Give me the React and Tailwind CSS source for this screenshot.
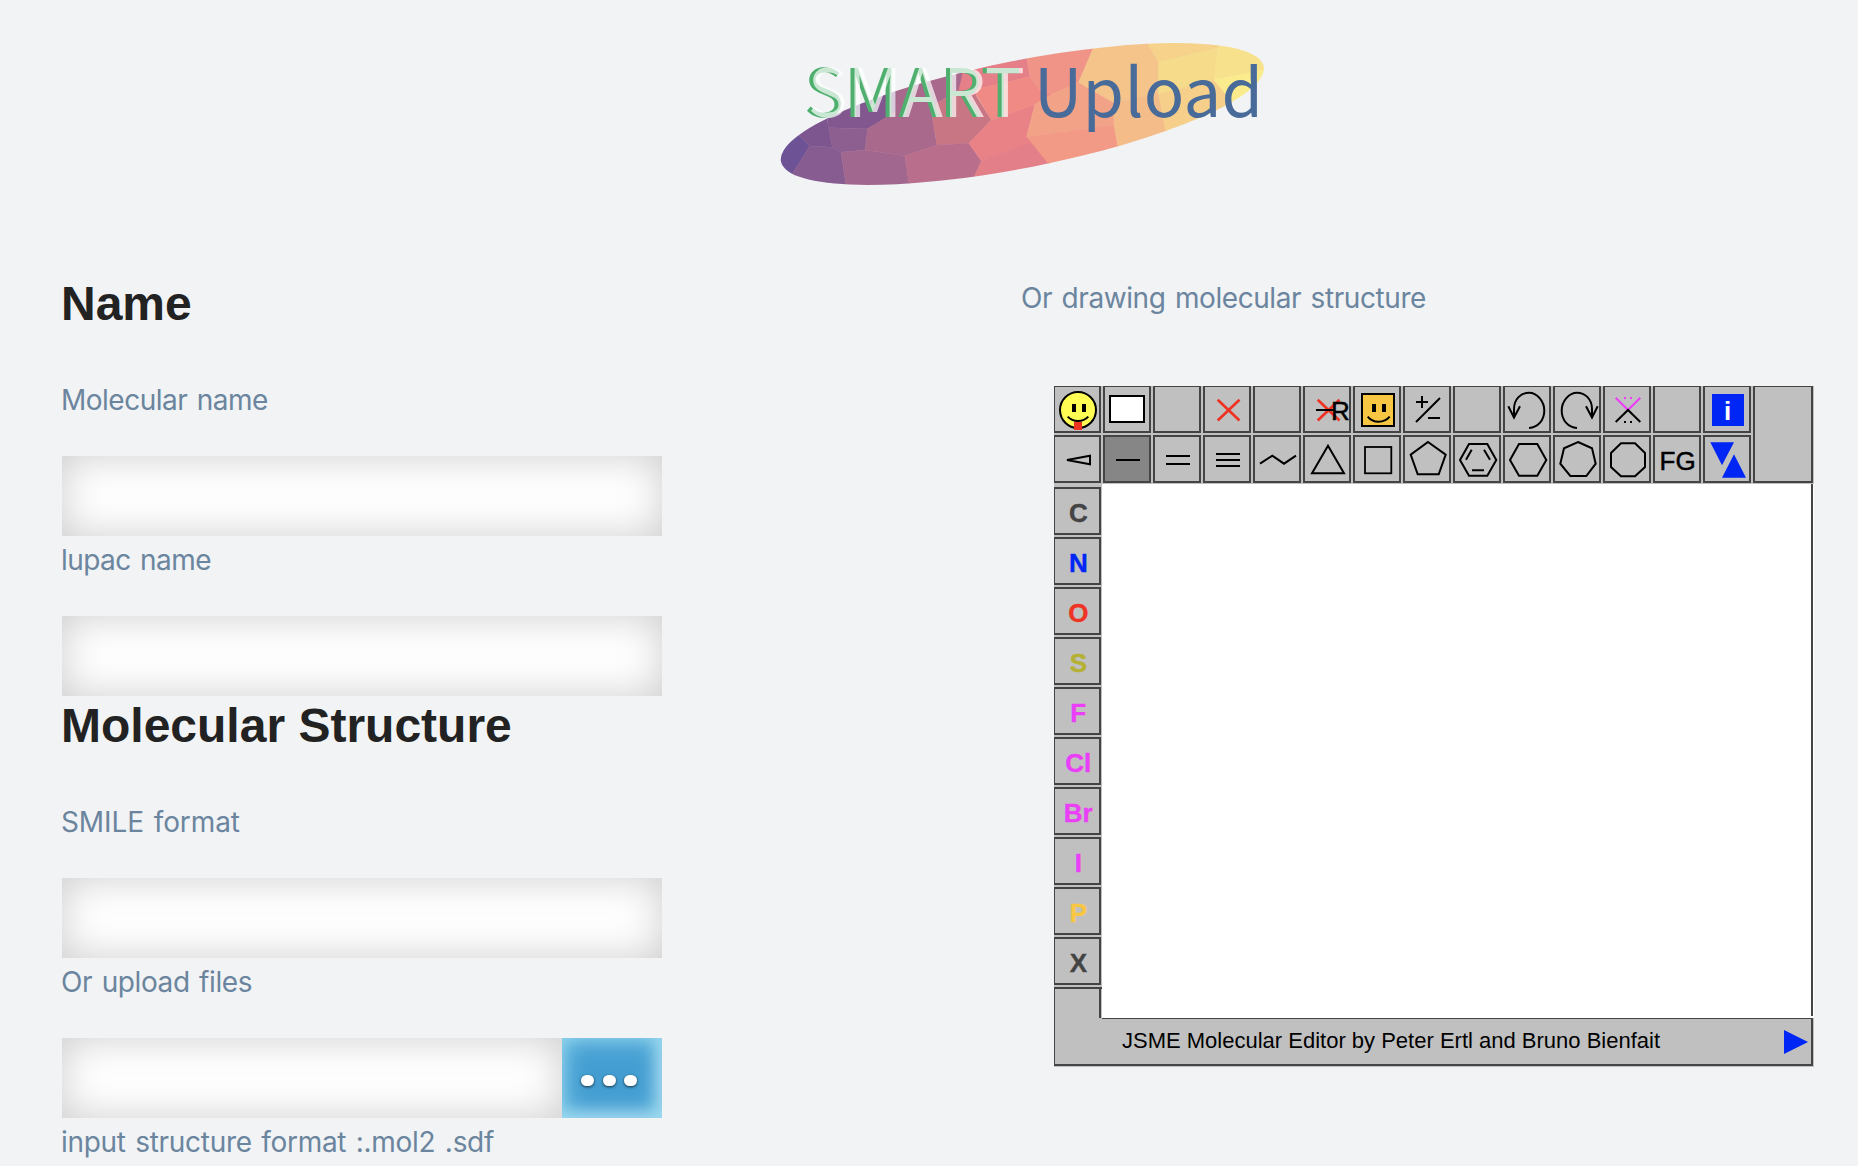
import React from "react";

const MOSAIC = [
  ["#6d5296", "0,280 88,317 119,348 68,430 0,480"],
  ["#7d568f", "88,317 40,250 160,200 176,293 187,352 119,348"],
  ["#82578f", "176,293 165,200 377,120 377,245 293,296"],
  ["#8d5f90", "176,293 293,296 285,360 213,367 187,352"],
  ["#875c90", "119,348 187,352 213,367 232,490 40,490 68,430"],
  ["#a2678e", "213,367 285,360 405,377 421,490 232,490"],
  ["#a8698c", "293,296 377,245 377,120 590,100 567,180 500,220 487,262 501,345 405,377 285,360"],
  ["#c87684", "487,262 500,220 567,180 590,100 620,200 664,270 597,340 501,345"],
  ["#b96f8b", "405,377 501,345 597,340 634,393 600,470 421,490"],
  ["#e88287", "664,270 795,223 770,320 790,340 634,393 597,340"],
  ["#e57f88", "567,180 585,100 770,50 770,85 780,140 610,180"],
  ["#ef8a84", "610,180 780,140 810,180 850,192 795,223 664,270"],
  ["#f09487", "770,85 770,50 980,30 970,55 926,157 850,192 810,180 780,140"],
  ["#f2a387", "795,223 850,190 926,157 1032,218 1032,285 770,320"],
  ["#e27f88", "634,393 790,338 843,400 840,450 600,470"],
  ["#f29a86", "770,320 1032,285 1050,380 843,410"],
  ["#f4c48a", "970,55 975,20 1130,20 1133,40 1166,97 1166,190 1032,218 926,157"],
  ["#f4bc88", "1032,218 1166,190 1188,303 1188,340 1047,370 1032,285"],
  ["#f7d28a", "1133,40 1120,10 1350,10 1345,53 1166,97"],
  ["#f6db8a", "1166,97 1345,53 1332,150 1166,195"],
  ["#f6d08a", "1166,193 1332,150 1370,195 1400,240 1192,330"],
  ["#f8e18c", "1345,53 1350,10 1500,10 1500,116 1332,150"],
  ["#faeb8c", "1332,150 1500,116 1500,220 1385,240 1370,195"],
];

function Logo() {
  const font = "font-['Noto_Sans_CJK_SC','Noto_Sans',sans-serif]";
  return (
    <svg className="h-[170px] w-[520px]" viewBox="0 0 1560 510">
      <clipPath id="lens">
        <ellipse cx="757" cy="252" rx="738" ry="161" transform="rotate(-11.15 757 252)" />
      </clipPath>
      <filter id="glaze" x="-5%" y="-5%" width="110%" height="110%" colorInterpolationFilters="sRGB">
        <feOffset in="SourceAlpha" dx="12" result="moved" />
        <feFlood floodColor="#fff" floodOpacity=".7" />
        <feComposite in2="moved" operator="in" result="white" />
        <feMerge>
          <feMergeNode in="SourceGraphic" />
          <feMergeNode in="white" />
        </feMerge>
      </filter>
      <g clipPath="url(#lens)">
        {MOSAIC.map(([c, p]) => (
          <polygon key={p} points={p} fill={c} stroke={c} strokeWidth="1.5" />
        ))}
      </g>
      <text x="101" y="262" fontSize="201" textLength="652" fill="#4faf6e" filter="url(#glaze)" className={font}>SMART</text>
      <text x="792" y="262" fontSize="201" textLength="687" fill="#486b99" className={font}>Upload</text>
    </svg>
  );
}

const BLUE = "#0026f5";
const RED = "#ee3324";
const PINK = "#ea3ff7";

const RotateArrow = () => (
  <path d="M26 43C35 42.5 41.3 35 41.3 25.5S34 7.7 26 7.7S11 14 11 24V32.5M5.3 21.3L11 32.5L17 21.3" />
);
const Hexagon = () => <polygon points="7,25 16,9 34.3,9 43.3,25 34.3,40.7 16,40.7" />;
const Cross = () => <path d="M14.7 14.7L36.5 35.5M36.5 14.7L14.7 35.5" stroke={RED} strokeWidth="2.7" />;
const Label = ({ children, ...rest }) => (
  <text fontSize="26" stroke="none" fill="#000" y="35.4" {...rest}>{children}</text>
);

const TOP_ROW = [
  <>
    <circle cx="25" cy="25" r="18" fill="#fffd54" />
    <path d="M19 19h4v8h-4zM29 19h4v8h-4z" fill="#000" stroke="none" />
    <path d="M14.7 31.7C20 37.5 30 37.5 35.3 31.7" />
    <path d="M21 37h8v8h-8z" fill={RED} stroke="none" />
  </>,
  <rect x="7" y="11" width="34" height="26" fill="#fff" />,
  null,
  <Cross />,
  null,
  <>
    <Cross />
    <path d="M13 25H31" />
    <Label x="28" stroke="#000" strokeWidth=".5">R</Label>
  </>,
  <>
    <rect x="9" y="9" width="32" height="32" fill="#f7c744" />
    <path d="M19 19h4v8h-4zM29 19h4v8h-4z" fill="#000" stroke="none" />
    <path d="M14.7 31.7C20 38.5 31 38.5 36.7 31.7" />
  </>,
  <path d="M13 17H25M19 11V23M13 37L37 13M25 33H37" />,
  null,
  <RotateArrow />,
  <g transform="translate(50 0) scale(-1 1)"><RotateArrow /></g>,
  <>
    <path d="M12.7 12.7L25 25L37.3 12.7" stroke={PINK} />
    <path d="M21 12h2v2h-2zM27 12h2v2h-2z" fill={PINK} stroke="none" />
    <path d="M12.7 37L25 25L37.3 37" />
    <path d="M21 36h2v2h-2zM27 36h2v2h-2z" fill="#000" stroke="none" />
  </>,
  null,
  <>
    <rect x="9" y="9" width="32" height="32" fill={BLUE} stroke="none" />
    <Label x="21" fill="#fff" fontWeight="bold">i</Label>
  </>,
];

const BOND_ROW = [
  <path d="M14 25L37 20.7V29.3Z" />,
  <path d="M13 25H37" />,
  <path d="M13 21H37M13 29H37" />,
  <path d="M13 19H37M13 25H37M13 31H37" />,
  <path d="M7 28.7L19.3 20.7L31 28.7L43 20.7" />,
  <polygon points="25,10.7 9,38.3 41,38.3" />,
  <rect x="12" y="12" width="26.3" height="26.3" strokeWidth="1.8" />,
  <polygon points="25,7 42.7,19.7 35.7,39.3 14.7,39.3 7.7,19.7" />,
  <>
    <Hexagon />
    <path d="M13 24.7L18.7 14.7M31 14.7L37 24.7M19 35.3H31" />
  </>,
  <Hexagon />,
  <polygon points="25,7 39,13.3 42.7,28.7 33.3,41 17.3,41 7.3,28.7 11,13.3" />,
  <polygon points="18,8.3 32,8.3 42,18 42,32 32,41.3 18,41.3 8,32 8,18" />,
  <Label x="6.5" stroke="#000" strokeWidth=".5">FG</Label>,
  <path d="M7.3 7.3H31L19 30.3ZM31 19.3L43 42.7H19Z" fill={BLUE} stroke="none" />,
];

const ATOMS = [
  ["C", "#444444"],
  ["N", BLUE],
  ["O", RED],
  ["S", "#b5b133"],
  ["F", PINK],
  ["Cl", PINK],
  ["Br", PINK],
  ["I", PINK],
  ["P", "#f7c744"],
  ["X", "#444444"],
];

function Cell({ children, active }) {
  return (
    <div className={`size-12 shrink-0 border-2 border-[#444] ${active ? "bg-[#868686]" : "bg-[#c0c0c0]"}`}>
      <svg className="block size-11 overflow-visible" viewBox="2 2 44 44" fill="none" stroke="#000" strokeWidth="2">
        {children}
      </svg>
    </div>
  );
}

function Editor() {
  return (
    <div className="h-[681px] w-[760px] overflow-hidden bg-[#c0c0c0] font-['Liberation_Sans',Arial,sans-serif]">
      <div className="-mt-px -ml-px flex h-[99px] w-[761px] gap-0.5">
        <div className="flex flex-col gap-0.5">
          {[TOP_ROW, BOND_ROW].map((row, r) => (
            <div key={r} className="flex gap-0.5">
              {row.map((icon, i) => (
                <Cell key={i} active={r === 1 && i === 1}>{icon}</Cell>
              ))}
            </div>
          ))}
        </div>
        <div className="h-[98px] w-[60px] border-2 border-[#444]" />
      </div>
      <div className="flex h-[534px]">
        <div className="-ml-px flex w-[49px] shrink-0 flex-col gap-0.5 pt-[3px]">
          {ATOMS.map(([name, color]) => (
            <Cell key={name}>
              <Label x="25.3" textAnchor="middle" fontWeight="bold" fill={color} stroke={color} strokeWidth=".4">{name}</Label>
            </Cell>
          ))}
          <div className="h-0.5 bg-[#444]" />
          <div className="-mt-0.5 w-12 grow border-x-2 border-[#444]" />
        </div>
        <div className="grow bg-white pr-px pb-0.5">
          <div className="h-full border-r-2 border-[#444]" />
        </div>
      </div>
      <div className="flex h-12">
        <div className="-mt-px w-[48px] shrink-0 border-b-2 border-l border-[#444]" />
        <div className="mr-px flex grow items-center justify-between border-t border-r-2 border-b-2 border-[#444] pr-[3px] pl-5">
          <span className="pb-0.5 text-[22px] leading-none whitespace-nowrap">JSME Molecular Editor by Peter Ertl and Bruno Bienfait</span>
          <svg className="h-6 w-6" viewBox="0 0 24 24"><path d="M0 0L24 12L0 24Z" fill={BLUE} /></svg>
        </div>
      </div>
    </div>
  );
}

const Heading = ({ children }) => (
  <h2 className="-ml-px h-[102px] pt-[3px] font-['Liberation_Sans',Arial,sans-serif] text-5xl leading-[54px] font-bold text-[#222]">{children}</h2>
);
const Caption = ({ children, className = "-ml-px" }) => (
  <p className={`h-20 text-[28px] leading-[49px] whitespace-nowrap text-[#6b859e] [word-spacing:2px] ${className}`}>{children}</p>
);
const Field = () => (
  <div className="h-20 grow bg-white shadow-[inset_0_0_42px_rgba(0,0,0,0.2)]" />
);
const Dot = () => <i className="h-[11px] w-[13px] rounded-full bg-white shadow-[0_1px_3px_rgba(0,0,0,0.7)]" />;

export default function App() {
  return (
    <div className="h-[1166px] w-[1858px] overflow-hidden bg-[#f1f3f5] font-['Inter',sans-serif]">
      <header className="pt-[30px] pl-[770px]">
        <Logo />
      </header>
      <main className="flex pt-[74px] pl-[62px]">
        <section className="w-[600px]">
          <Heading>Name</Heading>
          <Caption className="-ml-px tracking-[-0.5px]">Molecular name</Caption>
          <div className="flex"><Field /></div>
          <Caption className="-ml-px tracking-[-0.55px]">lupac name</Caption>
          <div className="flex"><Field /></div>
          <Heading>Molecular Structure</Heading>
          <Caption className="-ml-px tracking-[-0.1px]">SMILE format</Caption>
          <div className="flex"><Field /></div>
          <Caption className="-ml-px tracking-[-0.4px]">Or upload files</Caption>
          <div className="flex">
            <Field />
            <button className="flex h-20 w-[100px] items-center justify-center gap-[8.4px] bg-[#439dd1] pt-[5px] pr-[6px] shadow-[inset_0_0_28px_#8fd8f0,inset_-4px_-4px_16px_rgba(255,255,255,0.65)]">
              <Dot />
              <Dot />
              <Dot />
            </button>
          </div>
          <Caption className="-ml-px tracking-[-0.3px]">input structure format :.mol2 .sdf</Caption>
        </section>
        <section className="ml-[359px]">
          <div className="h-28"><Caption className="tracking-[-0.42px]">Or drawing molecular structure</Caption></div>
          <div className="pl-[33px]"><Editor /></div>
        </section>
      </main>
    </div>
  );
}
